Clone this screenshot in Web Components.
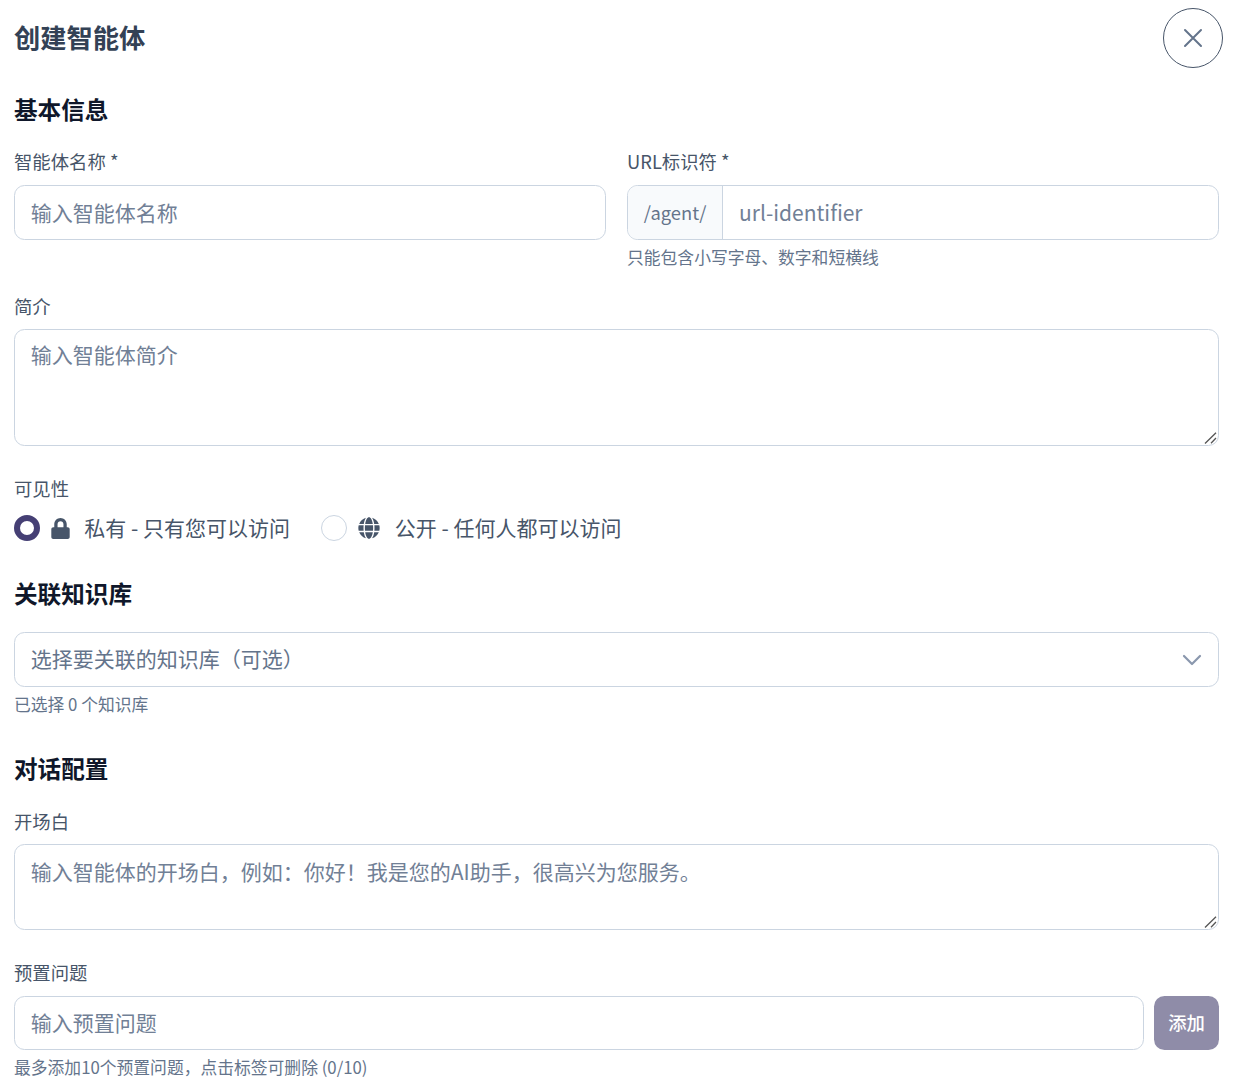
<!DOCTYPE html>
<html lang="zh-CN">
<head>
<meta charset="utf-8">
<title>创建智能体</title>
<style>
  html, body { margin: 0; background: #fff; }
  body {
    font-family: "Noto Sans CJK SC", "Noto Sans", sans-serif;
    color: #334155;
    overflow: hidden;
  }
</style>
</head>
<body>
<agent-form></agent-form>

<template id="form-template">
  <style>
    :host { display: block; padding: 8px 10px 0 14px; height: 1074px; overflow: hidden; }
    .two { display: grid; grid-template-columns: 592px 592px; column-gap: 21px; width: 1205px; margin-bottom: 25px; }
    .body { width: 1205px; }
    .row { display: flex; gap: 10px; }
    .row text-box { flex: 1; }
  </style>
  <dialog-header title="创建智能体"></dialog-header>
  <section-title style="--top: 26px; --bottom: 23px">基本信息</section-title>
  <div class="two">
    <form-field label="智能体名称 *"><text-box placeholder="输入智能体名称"></text-box></form-field>
    <form-field label="URL标识符 *" hint="只能包含小写字母、数字和短横线"><url-box prefix="/agent/" placeholder="url-identifier"></url-box></form-field>
  </div>
  <div class="body">
    <form-field label="简介" style="--gap: 9px; --after: 30px"><area-box rows-height="117px" placeholder="输入智能体简介" style="--pad: 8px"></area-box></form-field>
    <form-field label="可见性" style="--gap: 13px">
      <visibility-group></visibility-group>
    </form-field>
    <section-title style="--top: 37px; --bottom: 22px">关联知识库</section-title>
    <form-field hint="已选择 0 个知识库" style="--after: 37px"><select-box>选择要关联的知识库（可选）</select-box></form-field>
    <section-title style="--bottom: 24px">对话配置</section-title>
    <form-field label="开场白" style="--gap: 9px; --after: 30px"><area-box rows-height="86px" placeholder="输入智能体的开场白，例如：你好！我是您的AI助手，很高兴为您服务。" style="--pad: 10px"></area-box></form-field>
    <form-field label="预置问题" hint="最多添加10个预置问题，点击标签可删除 (0/10)">
      <div class="row">
        <text-box placeholder="输入预置问题" style="--h: 54px"></text-box>
        <add-button>添加</add-button>
      </div>
    </form-field>
  </div>
</template>

<template id="header-template">
  <style>
    :host { display: flex; align-items: center; justify-content: space-between; height: 60px; }
    h2 { margin: 0 0 2px; font-size: 26.25px; line-height: 36px; font-weight: 700; color: #334155; }
    button {
      width: 60px; height: 60px; padding: 0; border: 1px solid #475569; border-radius: 50%;
      background: #fff; display: flex; align-items: center; justify-content: center;
    }
    svg { display: block; }
  </style>
  <h2></h2>
  <button aria-label="关闭">
    <svg width="24" height="24" viewBox="0 0 24 24" fill="none" stroke="#64748b" stroke-width="2" stroke-linecap="round"><path d="M4 4l16 16M20 4L4 20"/></svg>
  </button>
</template>

<template id="section-template">
  <style>
    :host {
      display: block; margin: var(--top, 0) 0 var(--bottom, 0); padding-bottom: 2px;
      font-size: 23.625px; line-height: 30px; font-weight: 700; color: #0f172a;
    }
  </style>
  <slot></slot>
</template>

<template id="field-template">
  <style>
    :host { display: block; margin-bottom: var(--after, 0); }
    label { display: block; font-size: 18.375px; line-height: 24px; padding-bottom: 2px; color: #475569; margin-bottom: var(--gap, 10px); }
    .hint { font-size: 16.8px; line-height: 24px; color: #64748b; margin-top: 5px; }
    [hidden] { display: none; }
  </style>
  <label></label>
  <slot></slot>
  <div class="hint"></div>
</template>

<template id="text-template">
  <style>
    :host { display: block; }
    input {
      display: block; box-sizing: border-box; width: 100%; height: var(--h, 55px); padding: 0 15.75px 2px;
      border: 1px solid #cbd5e1; border-radius: 10.5px; background: #fff; outline: none;
      font: inherit; font-size: 21px; color: #334155;
    }
    input::placeholder { color: #718096; opacity: 1; }
  </style>
  <input type="text">
</template>

<template id="url-template">
  <style>
    :host {
      display: flex; box-sizing: border-box; height: 55px;
      border: 1px solid #cbd5e1; border-radius: 10.5px; overflow: hidden; background: #fff;
    }
    span {
      display: flex; align-items: center; padding: 0 15.75px 2px; background: #f8fafc;
      border-right: 1px solid #cbd5e1; font-size: 18.375px; color: #64748b;
    }
    input {
      flex: 1; min-width: 0; padding: 0 15.75px 2px; border: 0; outline: none; background: transparent;
      font: inherit; font-size: 21px; color: #334155;
    }
    input::placeholder { color: #718096; opacity: 1; }
  </style>
  <span></span>
  <input type="text">
</template>

<template id="area-template">
  <style>
    :host { display: block; }
    textarea {
      display: block; box-sizing: border-box; width: 100%; padding: var(--pad, 9px) 15.75px;
      border: 1px solid #cbd5e1; border-radius: 10.5px; background: #fff; outline: none;
      font: inherit; font-size: 21px; line-height: 32px; color: #334155; resize: vertical;
    }
    textarea::placeholder { color: #718096; opacity: 1; }
    /* the stock grip is too faint next to the reference, so draw our own */
    textarea::-webkit-resizer {
      background: url("data:image/svg+xml,%3Csvg xmlns='http://www.w3.org/2000/svg' width='15' height='15'%3E%3Cpath d='M13 2.7L2 13.5M13 8L8 13.2' stroke='%23555' stroke-width='1.3' fill='none'/%3E%3C/svg%3E") no-repeat;
    }
  </style>
  <textarea></textarea>
</template>

<template id="visibility-template">
  <style>
    :host { display: flex; align-items: center; gap: 31px; height: 26px; font-size: 21px; color: #475569; }
    .option { display: flex; align-items: center; }
    .dot { box-sizing: border-box; width: 26.25px; height: 26.25px; border-radius: 50%; background: #fff; border: 1px solid #cbd5e1; }
    .dot.on { border: 6px solid #453f74; }
    svg { display: block; width: 21px; height: 21px; margin: 0 13px 0 10px; fill: #475569; }
    svg.globe { width: 22px; height: 22px; margin: 0 15px 0 10.5px; }
    .text { position: relative; top: -1px; }
  </style>
  <div class="option">
    <span class="dot on"></span>
    <svg viewBox="0 0 448 512"><path d="M400 224h-24v-72C376 68.2 307.8 0 224 0S72 68.2 72 152v72H48c-26.5 0-48 21.5-48 48v192c0 26.5 21.5 48 48 48h352c26.5 0 48-21.5 48-48V272c0-26.5-21.5-48-48-48zm-104 0H152v-72c0-39.7 32.3-72 72-72s72 32.3 72 72v72z"/></svg>
    <span class="text">私有 - 只有您可以访问</span>
  </div>
  <div class="option">
    <span class="dot"></span>
    <svg class="globe" viewBox="0 0 496 512"><path d="M336.5 160C322 70.7 287.8 8 248 8s-74 62.7-88.5 152h177zM152 256c0 22.2 1.2 43.5 3.3 64h185.3c2.1-20.5 3.3-41.8 3.3-64s-1.2-43.5-3.3-64H155.3c-2.1 20.5-3.3 41.8-3.3 64zm324.7-96c-28.6-67.9-86.5-120.4-158-141.6 24.4 33.8 41.2 84.7 50 141.6h108zM177.2 18.4C105.8 39.6 47.8 92.1 19.3 160h108c8.7-56.9 25.5-107.8 49.9-141.6zM487.4 192H372.7c2.1 21 3.3 42.5 3.3 64s-1.2 43-3.3 64h114.6c5.5-20.5 8.6-41.8 8.6-64s-3.1-43.5-8.5-64zM120 256c0-21.5 1.2-43 3.3-64H8.6C3.2 212.5 0 233.8 0 256s3.2 43.5 8.6 64h114.6c-2-21-3.2-42.5-3.2-64zm39.5 96c14.5 89.3 48.7 152 88.5 152s74-62.7 88.5-152h-177zm159.3 141.6c71.4-21.2 129.4-73.7 158-141.6h-108c-8.8 56.9-25.6 107.8-50 141.6zM19.3 352c28.6 67.9 86.5 120.4 158 141.6-24.4-33.8-41.2-84.7-50-141.6h-108z"/></svg>
    <span class="text">公开 - 任何人都可以访问</span>
  </div>
</template>

<template id="select-template">
  <style>
    :host {
      display: flex; align-items: center; justify-content: space-between; box-sizing: border-box;
      height: 55px; padding: 0 16px 0 15.75px; border: 1px solid #cbd5e1; border-radius: 10.5px;
      background: #fff; font-size: 21px; color: #64748b;
    }
    .label { padding-bottom: 3px; }
    svg { display: block; }
  </style>
  <span class="label"><slot></slot></span>
  <svg width="20" height="12" viewBox="0 0 20 12" fill="none" stroke="#8a97ad" stroke-width="2.2" stroke-linecap="round" stroke-linejoin="round"><path d="M2 2l8 8 8-8"/></svg>
</template>

<template id="button-template">
  <style>
    :host {
      display: flex; align-items: center; justify-content: center; box-sizing: border-box; width: 65px; height: 54px; padding-bottom: 2px;
      border-radius: 10.5px; background: #8f8ca8; color: #fff; font-size: 18.375px; font-weight: 500;
    }
  </style>
  <slot></slot>
</template>

<script>
  // every element is the same boilerplate: clone its template into an open shadow root
  function fromTemplate(id, setup) {
    return class extends HTMLElement {
      constructor() {
        super();
        this.shadow = this.attachShadow({ mode: "open" });
        this.shadow.appendChild(document.getElementById(id).content.cloneNode(true));
      }
      connectedCallback() {
        if (setup) setup.call(this, this.shadow);
      }
    };
  }

  customElements.define("agent-form", fromTemplate("form-template"));
  customElements.define("dialog-header", fromTemplate("header-template", function (root) {
    root.querySelector("h2").textContent = this.getAttribute("title");
  }));
  customElements.define("section-title", fromTemplate("section-template"));
  customElements.define("form-field", fromTemplate("field-template", function (root) {
    const label = root.querySelector("label");
    const hint = root.querySelector(".hint");
    label.textContent = this.getAttribute("label") || "";
    hint.textContent = this.getAttribute("hint") || "";
    label.hidden = !this.hasAttribute("label");
    hint.hidden = !this.hasAttribute("hint");
  }));
  customElements.define("text-box", fromTemplate("text-template", function (root) {
    root.querySelector("input").placeholder = this.getAttribute("placeholder");
  }));
  customElements.define("url-box", fromTemplate("url-template", function (root) {
    root.querySelector("span").textContent = this.getAttribute("prefix");
    root.querySelector("input").placeholder = this.getAttribute("placeholder");
  }));
  customElements.define("area-box", fromTemplate("area-template", function (root) {
    const area = root.querySelector("textarea");
    area.placeholder = this.getAttribute("placeholder");
    area.style.height = this.getAttribute("rows-height");
  }));
  customElements.define("visibility-group", fromTemplate("visibility-template"));
  customElements.define("select-box", fromTemplate("select-template"));
  customElements.define("add-button", fromTemplate("button-template"));
</script>
</body>
</html>
